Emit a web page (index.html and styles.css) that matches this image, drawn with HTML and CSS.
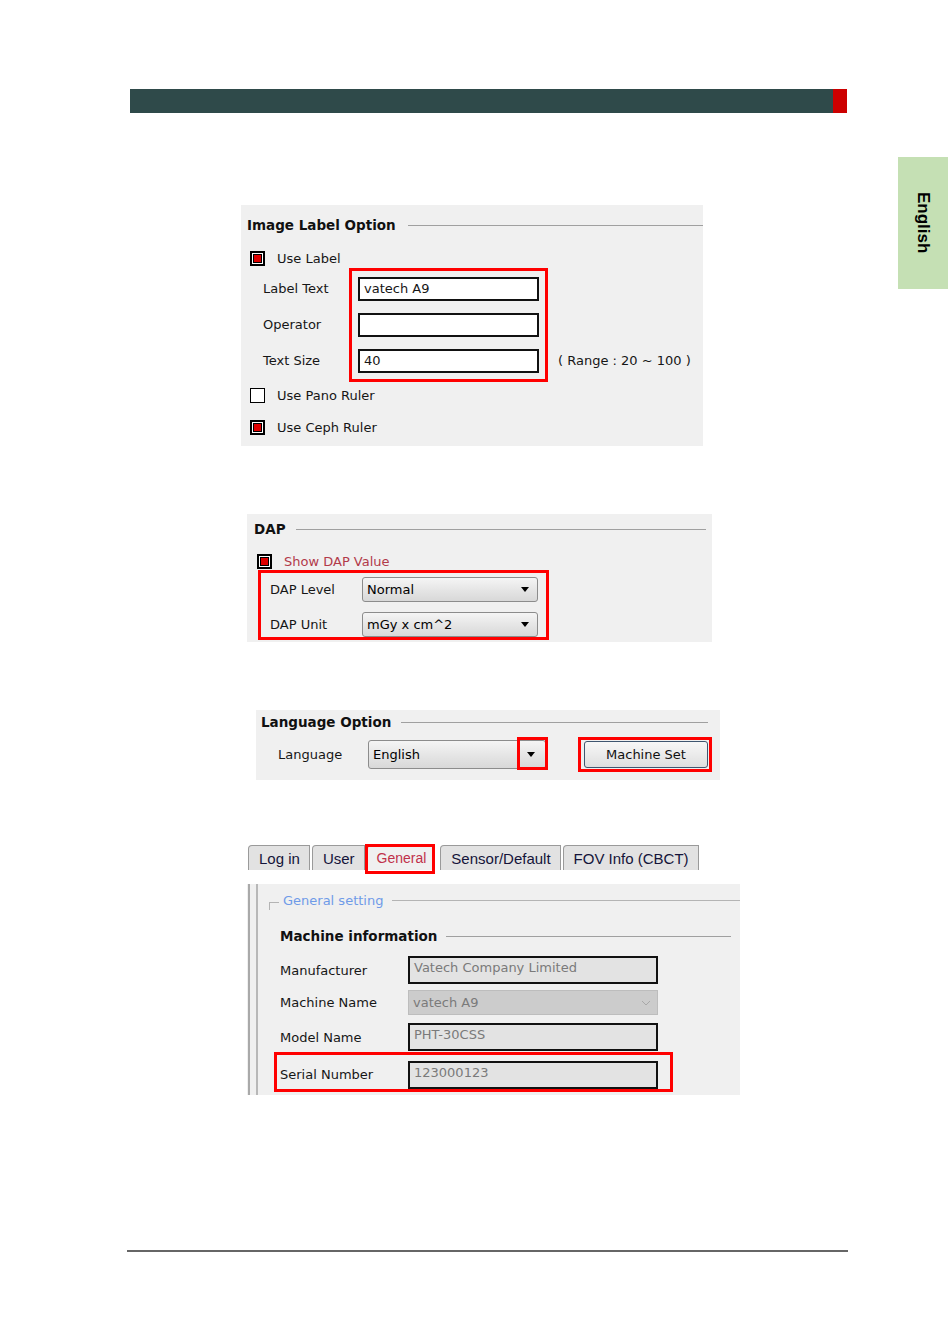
FILE: index.html
```html
<!DOCTYPE html>
<html>
<head>
<meta charset="utf-8">
<title>Settings</title>
<link rel="stylesheet" href="styles.css">
</head>
<body>
<div class="page">
  <div class="topbar"><div class="topbar-fill"></div><div class="topbar-end"></div></div>
  <div class="side-tab"><span>English</span></div>

  <section class="panel p-label">
    <div class="group-title gt-label"><span>Image Label Option</span><i class="rule"></i></div>
    <div class="check-row cr-uselabel"><span class="cb on"></span><span>Use Label</span></div>
    <div class="fields">
      <div class="field-labels">
        <div class="flabel">Label Text</div>
        <div class="flabel">Operator</div>
        <div class="flabel">Text Size</div>
      </div>
      <div class="fields-box">
        <div class="tbox">vatech A9</div>
        <div class="tbox"></div>
        <div class="tbox">40</div>
      </div>
      <div class="range">( Range : 20 ~ 100 )</div>
    </div>
    <div class="check-row cr-pano"><span class="cb"></span><span>Use Pano Ruler</span></div>
    <div class="check-row cr-ceph"><span class="cb on"></span><span>Use Ceph Ruler</span></div>
  </section>

  <section class="panel p-dap">
    <div class="group-title gt-dap"><span>DAP</span><i class="rule"></i></div>
    <div class="check-row cr-dap"><span class="cb on"></span><span class="red-text">Show DAP Value</span></div>
    <div class="dap-box">
      <div class="dap-row">
        <span class="dlabel">DAP Level</span>
        <div class="select"><span class="sel-text">Normal</span><span class="tri"></span></div>
      </div>
      <div class="dap-row">
        <span class="dlabel">DAP Unit</span>
        <div class="select"><span class="sel-text">mGy x cm^2</span><span class="tri"></span></div>
      </div>
    </div>
  </section>

  <section class="panel p-lang">
    <div class="group-title gt-lang"><span>Language Option</span><i class="rule"></i></div>
    <div class="lang-row">
      <span class="llabel">Language</span>
      <div class="select lang-select"><span class="sel-text">English</span><span class="tri"></span><span class="arrow-hl"></span></div>
      <div class="btn-hl"><div class="btn">Machine Set</div></div>
    </div>
  </section>

  <div class="tabs">
    <div class="tab">Log in</div>
    <div class="tab">User</div>
    <div class="tab active">General<span class="tab-hl"></span></div>
    <div class="tab">Sensor/Default</div>
    <div class="tab">FOV Info (CBCT)</div>
  </div>

  <section class="gpanel">
    <div class="gframe">
      <div class="ginner">
        <div class="legend-row"><span class="corner"></span><span class="legend">General setting</span><i class="rule legend-rule"></i></div>
        <div class="machine">
          <div class="group-title gt-machine"><span>Machine information</span><i class="rule"></i></div>
          <div class="mrow mr-1"><span class="mlabel">Manufacturer</span><div class="robox">Vatech Company Limited</div></div>
          <div class="mrow mr-2"><span class="mlabel">Machine Name</span><div class="combo"><span>vatech A9</span>
            <svg class="chev" width="10" height="6" viewBox="0 0 10 6"><polyline points="1,1 5,5 9,1" fill="none" stroke="#a8a8a8" stroke-width="1"/></svg></div></div>
          <div class="mrow mr-3"><span class="mlabel">Model Name</span><div class="robox">PHT-30CSS</div></div>
          <div class="mrow serial-hl"><span class="mlabel">Serial Number</span><div class="robox">123000123</div></div>
        </div>
      </div>
    </div>
  </section>

  <div class="footer-line"></div>
</div>
</body>
</html>
```

FILE: styles.css
```css
* { box-sizing: border-box; }
html, body { margin: 0; padding: 0; background: #fff; }
body { font-family: "DejaVu Sans", "Liberation Sans", sans-serif; font-size: 13px; color: #161616; }

.page { position: relative; width: 950px; min-height: 1342px; padding-top: 89px; }

.topbar { margin-left: 130px; width: 717px; height: 24px; display: flex; }
.topbar-fill { flex: 1; background: #2f4a4a; }
.topbar-end { width: 14px; background: #cc0000; }

.side-tab {
  position: absolute; top: 157px; left: 898px; width: 50px; height: 132px;
  background: #c5e0b4; display: flex; align-items: center; justify-content: center;
}
.side-tab span { writing-mode: vertical-rl; font-family: "Liberation Sans", Arial, sans-serif; font-weight: bold; font-size: 17px; color: #000; }

.panel { background: #f0f0f0; }

.group-title { display: flex; align-items: center; height: 20px; font-weight: bold; font-size: 13.5px; gap: 12px; color: #111; }
.group-title span { flex: none; }
.rule { flex: 1; height: 1px; background: #a0a0a0; display: block; }

.check-row { display: flex; align-items: center; height: 20px; gap: 12px; }
.cb { width: 15px; height: 15px; border: 1px solid #000; background: #fff; flex: none; }
.cb.on { border: 2px solid #000; background: #e00000; box-shadow: inset 0 0 0 1px #fff, inset 0 0 0 2px #000; }

/* Image label panel */
.p-label { margin: 92px 0 0 241px; width: 462px; height: 241px; padding: 10px 0 9px 0; }
.gt-label { padding-left: 6px; }
.p-label .check-row { padding-left: 9px; }
.cr-uselabel { margin-top: 13px; }
.fields { display: flex; margin-left: 22px; height: 114px; }
.field-labels { width: 86px; flex: none; padding-top: 9px; display: flex; flex-direction: column; gap: 12px; }
.flabel { height: 24px; line-height: 24px; }
.fields-box { width: 199px; flex: none; height: 114px; border: 3px solid #f00; padding: 6px; display: flex; flex-direction: column; gap: 12px; }
.tbox { height: 24px; border: 2px solid #111; background: #fff; padding-left: 4px; line-height: 20px; }
.range { flex: none; align-self: flex-end; margin: 0 0 9px 10px; line-height: 24px; }
.cr-pano { margin-top: 3px; }
.cr-ceph { margin-top: 12px; }

/* DAP panel */
.p-dap { margin: 68px 0 0 247px; width: 465px; height: 128px; padding: 5px 6px 0 0; }
.gt-dap { padding-left: 7px; gap: 10px; }
.cr-dap { margin-top: 12px; padding-left: 10px; }
.red-text { color: #b23a4a; }
.dap-box { margin: -1px 0 0 11px; width: 291px; height: 70px; border: 3px solid #f00; padding: 4px 8px 0 9px; display: flex; flex-direction: column; gap: 10px; }
.dap-row { display: flex; align-items: center; height: 25px; }
.dlabel { width: 92px; flex: none; }

.select {
  position: relative; flex: none; width: 176px; height: 25px; border: 1px solid #8c8c8c; border-radius: 3px;
  background: linear-gradient(#f5f5f5, #e6e6e6 50%, #d8d8d8);
  display: flex; align-items: center; justify-content: space-between; padding: 0 8px 0 4px; color: #000;
}
.tri { width: 0; height: 0; border-left: 4px solid transparent; border-right: 4px solid transparent; border-top: 5px solid #000; }

/* Language panel */
.p-lang { margin: 68px 0 0 256px; width: 464px; height: 70px; padding: 2px 12px 8px 0; }
.gt-lang { padding-left: 5px; gap: 10px; }
.lang-row { display: flex; align-items: center; margin: 5px 0 0 22px; height: 35px; }
.llabel { width: 90px; flex: none; }
.lang-select { width: 178px; height: 29px; padding-right: 10px; }
.arrow-hl { position: absolute; top: -4px; right: -3px; width: 31px; height: 33px; border: 3px solid #f00; }
.btn-hl { flex: none; margin-left: 32px; border: 3px solid #f00; padding: 1px 1px 1px 3px; }
.btn {
  width: 124px; height: 27px; border: 1px solid #3f5670; border-radius: 3px;
  background: linear-gradient(#f7f7f7, #ebebeb 50%, #dedede);
  display: flex; align-items: center; justify-content: center; color: #111;
}

/* Tabs */
.tabs { margin: 65px 0 0 248px; display: flex; gap: 2px; height: 25px; align-items: flex-end; }
.tab {
  position: relative; height: 25px; padding: 0 9px 0 10px; border: 1px solid #9a9a9a; border-bottom: none;
  border-radius: 4px 0 0 0; background: #e2e2e2; font-family: "Liberation Sans", Arial, sans-serif;
  font-size: 15px; line-height: 25px; color: #14143a;
}
.tab.active { background: #f0f0f0; color: #c0304a; margin-right: 4px; font-size: 14px; padding: 0 7px 0 9px; }
.tab-hl { position: absolute; top: -2px; left: -3px; right: -2px; bottom: -4px; border: 3px solid #f00; }

/* General panel */
.gpanel { margin: 14px 0 0 247px; width: 493px; height: 211px; background: #f0f0f0; padding-left: 1px; }
.gframe { height: 100%; border-left: 2px solid #a9a9a9; padding-left: 6px; }
.ginner { height: 100%; border-left: 2px solid #b8b8b8; padding-top: 6px; }
.legend-row { display: flex; align-items: center; height: 20px; margin-left: 11px; }
.corner { align-self: flex-end; width: 10px; height: 8px; border-top: 1px solid #b4b4b4; border-left: 1px solid #b4b4b4; margin-right: 4px; }
.legend { color: #6f9be8; }
.legend-rule { margin-left: 9px; background: #b4b4b4; }
.machine { margin-left: 22px; }
.gt-machine { margin-top: 16px; gap: 9px; padding-right: 9px; }
.mrow { display: flex; align-items: center; }
.mlabel { width: 128px; flex: none; }
.mr-1 { margin-top: 10px; height: 28px; }
.mr-2 { margin-top: 6px; height: 25px; }
.mr-3 { margin-top: 8px; height: 28px; }
.robox {
  flex: none; width: 250px; height: 28px; border: 2px solid #111; background: #e3e3e3; color: #7a7a7a;
  padding: 0 4px; line-height: 20px; align-self: flex-start;
}
.combo {
  flex: none; width: 250px; height: 25px; border: 1px solid #bdbdbd; background: #cccccc; color: #7a7a7a;
  display: flex; align-items: center; justify-content: space-between; padding: 0 6px 0 4px;
}
.serial-hl { margin: 1px 0 0 -6px; width: 399px; height: 40px; border: 3px solid #f00; padding: 6px 12px 0 3px; align-items: flex-start; }
.serial-hl .mlabel { line-height: 28px; }

.footer-line { margin: 155px 0 0 127px; width: 721px; height: 2px; background: #666; }
```
